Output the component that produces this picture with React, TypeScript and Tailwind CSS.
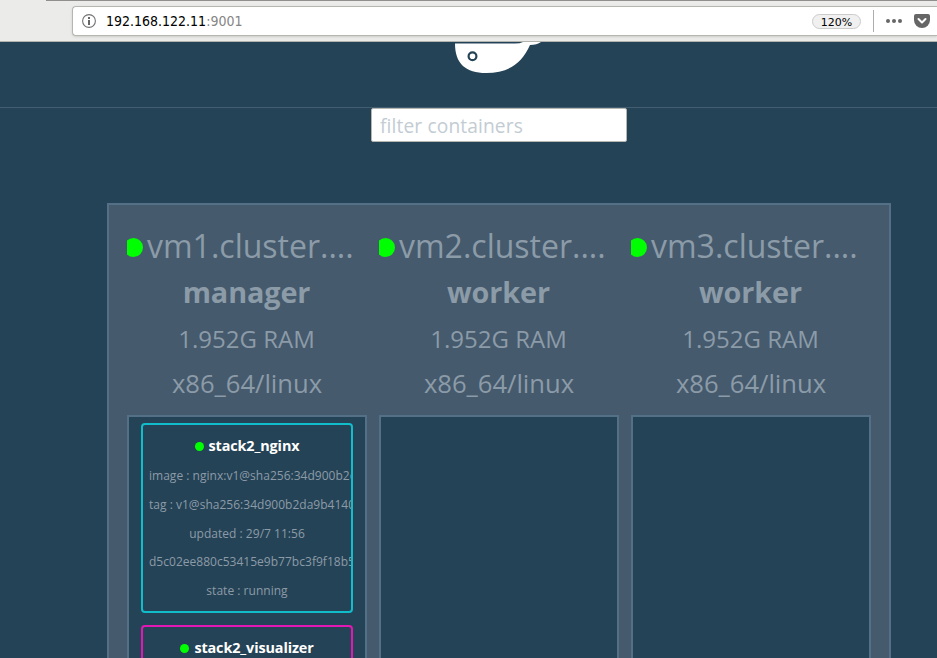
import React from "react";

type Service = { name: string; border: string; lines: string[] };
type Node = { name: string; role: string; services: Service[] };

const nodes: Node[] = [
  {
    name: "vm1.cluster....",
    role: "manager",
    services: [
      {
        name: "stack2_nginx",
        border: "border-[#11bdca]",
        lines: [
          "image : nginx:v1@sha256:34d900b2d",
          "tag : v1@sha256:34d900b2da9b4140",
          "updated : 29/7 11:56",
          "d5c02ee880c53415e9b77bc3f9f18b5",
          "state : running",
        ],
      },
      { name: "stack2_visualizer", border: "border-[#e318b4]", lines: [] },
    ],
  },
  { name: "vm2.cluster....", role: "worker", services: [] },
  { name: "vm3.cluster....", role: "worker", services: [] },
];

function AddressBar() {
  return (
    <div className="flex h-[42px] shrink-0 flex-col border-b border-[#b3b3ad] bg-[#ebebe9]">
      <div className="ml-[46px] h-px shrink-0 bg-[#918f8d]" />
      <div className="mt-[5px] ml-[72px] flex h-[30px] items-center rounded-l-[4px] border border-r-0 border-[#b6b6b0] bg-white shadow-sm">
        <svg className="ml-[9px] h-[14px] w-[14px]" viewBox="0 0 14 14" fill="none">
          <circle cx="7" cy="7" r="6.4" stroke="#737373" strokeWidth="1.1" />
          <path d="M6 3h2v2H6zM6 6h2v5H6z" fill="#666" />
        </svg>
        <div className="ml-[10px] font-['DejaVu_Sans_Condensed','DejaVu_Sans',sans-serif] text-[14px] font-stretch-condensed text-black">
          192.168.122.11<span className="text-[#858585]">:9001</span>
        </div>
        <div className="mr-3 ml-auto flex h-[15px] w-[49px] items-center justify-center rounded-full border border-[#cbcbcb] bg-[#f0f0f0] pt-[2px] font-['DejaVu_Sans',sans-serif] text-[11px] leading-[13px] text-black">
          120%
        </div>
        <div className="h-[22px] w-px bg-[#adadad]" />
        <svg className="ml-3 h-4 w-4" viewBox="0 0 16 16" fill="#666">
          <circle cx="2" cy="8" r="2" />
          <circle cx="8" cy="8" r="2" />
          <circle cx="14" cy="8" r="2" />
        </svg>
        <svg className="mr-[7px] ml-3 h-4 w-4" viewBox="0 0 16 16">
          <path d="M2 1h12q2 0 2 2v4a8 8 0 0 1-16 0V3q0-2 2-2Z" fill="#666" />
          <path d="m4.5 6 3.5 3.5L11.500 6" fill="none" stroke="#fff" strokeWidth="2" strokeLinecap="round" strokeLinejoin="round" />
        </svg>
      </div>
    </div>
  );
}

function ServiceCard({ service }: { service: Service }) {
  return (
    <div className={"mb-3 h-[190px] shrink-0 overflow-hidden rounded-[4px] border-2 px-[6px] pt-[6px] " + service.border}>
      <div className="flex h-[30px] items-center justify-center text-[14.4px] font-bold tracking-[-0.12px] text-white">
        <span className="mr-[5px] h-[9px] w-[9px] rounded-full bg-[#00ff00]" />
        {service.name}
      </div>
      {service.lines.map((line, i) => (
        <div key={i} className="h-[28.8px] text-center text-[12px] leading-[30px] tracking-[0.02px] whitespace-nowrap">
          {line}
        </div>
      ))}
    </div>
  );
}

function NodeColumn({ node }: { node: Node }) {
  return (
    <div className="flex w-[240px] flex-col">
      <div className="flex h-[45px] items-center text-[32px] leading-[45px] whitespace-nowrap">
        <svg className="mt-[3px] mr-1 h-[19px] w-4 shrink-0" viewBox="0 0 16 19">
          <circle cx="6.5" cy="9.5" r="9.5" fill="#00ff00" />
        </svg>
        {node.name}
      </div>
      <div className="h-[47px] pr-px text-center text-[28.8px] leading-[47px] font-bold tracking-[-0.1px]">{node.role}</div>
      <div className="h-[46px] pr-px text-center text-[24px] leading-[48px]">1.952G RAM</div>
      <div className="h-[54px] text-center text-[25.6px] leading-[46px]">x86_64/linux</div>
      <div className="flex flex-1 flex-col overflow-hidden border-2 border-b-0 border-[#537086] bg-[#254356] px-3 pt-[6px]">
        {node.services.map((s) => (
          <ServiceCard key={s.name} service={s} />
        ))}
      </div>
    </div>
  );
}

export default function App() {
  return (
    <div className="flex h-[658px] w-[937px] flex-col overflow-hidden bg-[#254356] font-['Open_Sans',sans-serif] text-[#8c9ba8]">
      <AddressBar />
      <div className="flex h-[66px] shrink-0 justify-center border-b border-[#435e70]">
        <svg className="ml-[61px] h-[32px] w-[88px]" viewBox="0 0 88 32">
          <path d="M0 1.500H60Q65 1.500 68 0H86Q82 3 75 3C67 21 54 31 31 31C11 31 0 22 0 1.500Z" fill="#fff" />
          <circle cx="17.500" cy="14.300" r="3.900" fill="#fff" stroke="#254356" strokeWidth="2.200" />
        </svg>
      </div>
      <input
        className="ml-[371px] h-[34px] w-[256px] shrink-0 rounded-[2px] border border-[#b6b6b0] bg-white px-2 text-[19.2px] tracking-[0.12px] outline-none placeholder:text-[#c3ccd3]"
        placeholder="filter containers"
      />
      <div className="mt-[61px] ml-[107px] flex w-[784px] flex-1 gap-3 overflow-hidden border-2 border-b-0 border-[#537086] bg-[#455a6d] px-[18px] pt-[18px]">
        {nodes.map((n) => (
          <NodeColumn key={n.name} node={n} />
        ))}
      </div>
    </div>
  );
}
